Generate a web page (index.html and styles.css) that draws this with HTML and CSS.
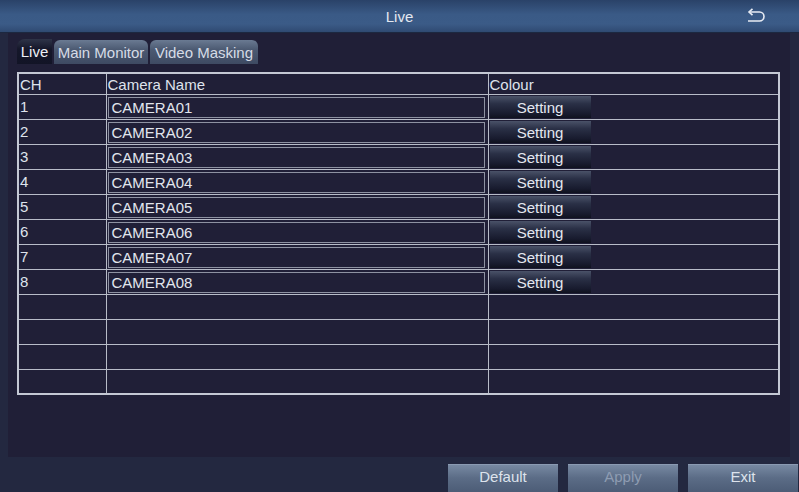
FILE: index.html
```html
<!DOCTYPE html>
<html>
<head>
<meta charset="utf-8">
<link rel="stylesheet" href="styles.css">
</head>
<body>
<div class="screen">
  <header class="titlebar">
    <span></span>
    <span class="title">Live</span>
    <span class="back">
      <svg width="22" height="16" viewBox="0 0 22 16">
        <path d="M4 4 H14.5 A4.5 4.5 0 0 1 14.5 13 H3" fill="none" stroke="#e8ecf4" stroke-width="1.6"/>
        <path d="M7.5 0.8 L4 4 L7.5 7.2" fill="none" stroke="#e8ecf4" stroke-width="1.6"/>
      </svg>
    </span>
  </header>
  <main class="panel">
    <nav class="tabs">
      <span class="tab active t1">Live</span>
      <span class="tab t2">Main Monitor</span>
      <span class="tab t3">Video Masking</span>
    </nav>
    <table class="grid">
      <colgroup><col class="c1"><col class="c2"><col class="c3"></colgroup>
      <tr class="head"><td>CH</td><td>Camera Name</td><td>Colour</td></tr>
      <tr><td>1</td><td><div class="input">CAMERA01</div></td><td><div class="setbtn">Setting</div></td></tr>
      <tr><td>2</td><td><div class="input">CAMERA02</div></td><td><div class="setbtn">Setting</div></td></tr>
      <tr><td>3</td><td><div class="input">CAMERA03</div></td><td><div class="setbtn">Setting</div></td></tr>
      <tr><td>4</td><td><div class="input">CAMERA04</div></td><td><div class="setbtn">Setting</div></td></tr>
      <tr><td>5</td><td><div class="input">CAMERA05</div></td><td><div class="setbtn">Setting</div></td></tr>
      <tr><td>6</td><td><div class="input">CAMERA06</div></td><td><div class="setbtn">Setting</div></td></tr>
      <tr><td>7</td><td><div class="input">CAMERA07</div></td><td><div class="setbtn">Setting</div></td></tr>
      <tr><td>8</td><td><div class="input">CAMERA08</div></td><td><div class="setbtn">Setting</div></td></tr>
      <tr><td></td><td></td><td></td></tr>
      <tr><td></td><td></td><td></td></tr>
      <tr><td></td><td></td><td></td></tr>
      <tr><td></td><td></td><td></td></tr>
    </table>
  </main>
  <footer class="actions">
    <span class="btn">Default</span>
    <span class="btn disabled">Apply</span>
    <span class="btn">Exit</span>
  </footer>
</div>
</body>
</html>
```
FILE: styles.css
```css
* { box-sizing: border-box; }
html, body {
  margin: 0;
  padding: 0;
  width: 799px;
  height: 492px;
  overflow: hidden;
  background: #232840;
  font-family: "Liberation Sans", Arial, sans-serif;
  font-size: 15px;
  color: #dfe3ec;
}
.screen {
  width: 799px;
  height: 492px;
  display: flex;
  flex-direction: column;
}
.titlebar {
  height: 33px;
  flex: none;
  display: grid;
  grid-template-columns: 1fr auto 1fr;
  align-items: center;
  background: linear-gradient(#2a4268 0%, #3a5a86 45%, #3b5b87 75%, #2f4a72 100%);
  border-bottom: 1px solid #1c2840;
}
.title {
  color: #e4e8f0;
  font-size: 15px;
}
.back {
  justify-self: end;
  padding-right: 32px;
  display: flex;
  align-items: center;
}
.panel {
  flex: none;
  height: 424px;
  margin: 0 9px 0 8px;
  background: #201f37;
  padding: 6px 0 0 9px;
  display: flex;
  flex-direction: column;
}
.tabs {
  height: 25px;
  display: flex;
  gap: 2px;
  align-items: flex-end;
}
.tab {
  height: 24px;
  line-height: 26px;
  text-align: center;
  border-radius: 6px 6px 0 0;
  background: linear-gradient(#6a7a92 0%, #4c5a72 40%, #3e4a62 100%);
  color: #d6dce6;
  font-size: 15px;
  white-space: nowrap;
}
.t1 { width: 35px; }
.t2 { width: 94px; }
.t3 { width: 108px; }
.tab.active {
  height: 25px;
  background: linear-gradient(#2e3448 0%, #15172a 40%, #121426 100%);
  color: #eef0f6;
  border-radius: 8px 0 0 0;
}
.grid {
  margin-top: 8px;
  width: 762px;
  border-collapse: collapse;
  border: 2px solid #c4c8d4;
  table-layout: fixed;
}
.c1 { width: 88px; }
.c2 { width: 382px; }
.c3 { width: 291px; }
.grid td {
  border: 1px solid #b8bcc8;
  height: 25px;
  padding: 0;
  vertical-align: top;
  color: #dfe3ec;
}
.grid td:first-child {
  padding: 3px 0 0 1px;
}
.grid tr.head td {
  height: 21px;
  padding: 2px 0 0 1px;
}
.input {
  margin: 2px 0 0 1px;
  width: 377px;
  height: 21px;
  border: 1px solid #8e92a2;
  padding: 1px 0 0 3px;
  color: #e2e6ee;
}
.setbtn {
  margin: 1px 0 0 1px;
  width: 101px;
  height: 22px;
  text-align: center;
  line-height: 24px;
  color: #e4e8f0;
  background: linear-gradient(#4a5268 0%, #2a3046 35%, #181b2e 80%, #10121f 100%);
}
.actions {
  flex: 1;
  display: flex;
  justify-content: flex-end;
  align-items: flex-start;
  gap: 10px;
  padding-top: 7px;
  padding-right: 1px;
}
.btn {
  width: 110px;
  height: 30px;
  text-align: center;
  line-height: 24px;
  font-size: 15px;
  color: #dde3ec;
  background: linear-gradient(#7789a2 0%, #5b6c86 45%, #4a5a74 100%);
  border-top: 1px solid #8a9ab2;
}
.btn.disabled {
  color: #8e9cb2;
}
```
